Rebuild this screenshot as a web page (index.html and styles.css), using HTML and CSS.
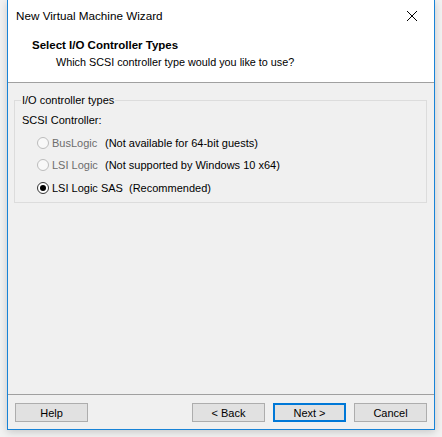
FILE: index.html
```html
<!DOCTYPE html>
<html>
<head>
<meta charset="utf-8">
<link rel="stylesheet" href="styles.css">
</head>
<body>
<div class="window">
  <div class="top">
    <div class="titlebar">
      <span class="title">New Virtual Machine Wizard</span>
      <svg class="close" width="12" height="12" viewBox="0 0 12 12"><path d="M1 1L11 11M11 1L1 11" stroke="#000" stroke-width="1"/></svg>
    </div>
    <div class="header">
      <div class="h1">Select I/O Controller Types</div>
      <div class="h2">Which SCSI controller type would you like to use?</div>
    </div>
  </div>
  <div class="content">
    <fieldset class="group">
      <legend>I/O controller types</legend>
      <div class="label">SCSI Controller:</div>
      <div class="opt disabled"><span class="radio"></span><span class="name">BusLogic</span><span class="note">(Not available for 64-bit guests)</span></div>
      <div class="opt disabled"><span class="radio"></span><span class="name">LSI Logic</span><span class="note">(Not supported by Windows 10 x64)</span></div>
      <div class="opt last"><span class="radio checked"></span><span class="name sas">LSI Logic SAS</span><span class="note">(Recommended)</span></div>
    </fieldset>
  </div>
  <div class="footer">
    <button class="btn">Help</button>
    <div class="spacer"></div>
    <button class="btn">&lt; Back</button>
    <button class="btn default">Next &gt;</button>
    <button class="btn">Cancel</button>
  </div>
</div>
</body>
</html>
```
FILE: styles.css
```css
html, body {
  margin: 0;
  padding: 0;
  background: #f2f2f2;
  width: 442px;
  height: 437px;
  overflow: hidden;
}
.window {
  margin-left: 7px;
  width: 426px;
  height: 429px;
  border-left: 1px solid #1883d7;
  border-right: 1px solid #1883d7;
  border-bottom: 1px solid #1883d7;
  background: #f0f0f0;
  display: flex;
  flex-direction: column;
  box-shadow: 0 2px 8px rgba(0,0,0,0.18);
  font-family: "Liberation Sans", sans-serif;
  font-size: 11px;
  color: #000;
}
.top {
  background: #fff;
  height: 82px;
  border-bottom: 1px solid #a0a0a0;
}
.titlebar {
  height: 31px;
  display: flex;
  align-items: center;
  padding-left: 8px;
  padding-right: 16px;
}
.title {
  font-size: 11.7px;
  flex: 1;
}
.header {
  padding-left: 24px;
}
.h1 {
  font-weight: bold;
  font-size: 11.5px;
  margin-top: 8px;
  line-height: 13px;
}
.h2 {
  padding-left: 24px;
  margin-top: 4px;
  line-height: 13px;
  font-size: 10.8px;
}
.content {
  flex: 1;
  padding: 11px 7px 0 6px;
}
.group {
  margin: 0;
  border: 1px solid #dcdcdc;
  padding: 0 7px 6px 7px;
  height: 109px;
  box-sizing: border-box;
}
.group legend {
  padding: 0 1px;
  margin-left: -1px;
  line-height: 13px;
}
.label {
  margin-top: 7px;
  height: 18px;
  line-height: 13px;
}
.opt {
  display: flex;
  align-items: center;
  height: 22px;
  padding-left: 15px;
}
.opt.last {
  margin-top: 1px;
}
.radio {
  width: 12px;
  height: 12px;
  border-radius: 50%;
  border: 1px solid #333;
  background: #fff;
  box-sizing: border-box;
  margin-right: 3px;
  position: relative;
}
.disabled .radio {
  border-color: #bcbcbc;
  background: #f8f8f8;
}
.radio.checked::after {
  content: "";
  position: absolute;
  left: 2px;
  top: 2px;
  width: 6px;
  height: 6px;
  border-radius: 50%;
  background: #000;
}
.name {
  width: 53px;
}
.name.sas {
  width: 77px;
}
.disabled .name {
  color: #6d6d6d;
}
.footer {
  border-top: 1px solid #a0a0a0;
  height: 35px;
  display: flex;
  align-items: flex-start;
  padding: 8px 7px 0 7px;
  box-sizing: border-box;
}
.spacer {
  flex: 1;
}
.btn {
  width: 73px;
  height: 19px;
  margin: 0;
  padding: 0;
  border: 1px solid #adadad;
  background: #e1e1e1;
  font-family: "Liberation Sans", sans-serif;
  font-size: 11px;
  color: #000;
  margin-left: 8px;
  box-sizing: border-box;
}
.btn:first-child {
  margin-left: 0;
}
.btn.default {
  border: 2px solid #0078d7;
}
```
